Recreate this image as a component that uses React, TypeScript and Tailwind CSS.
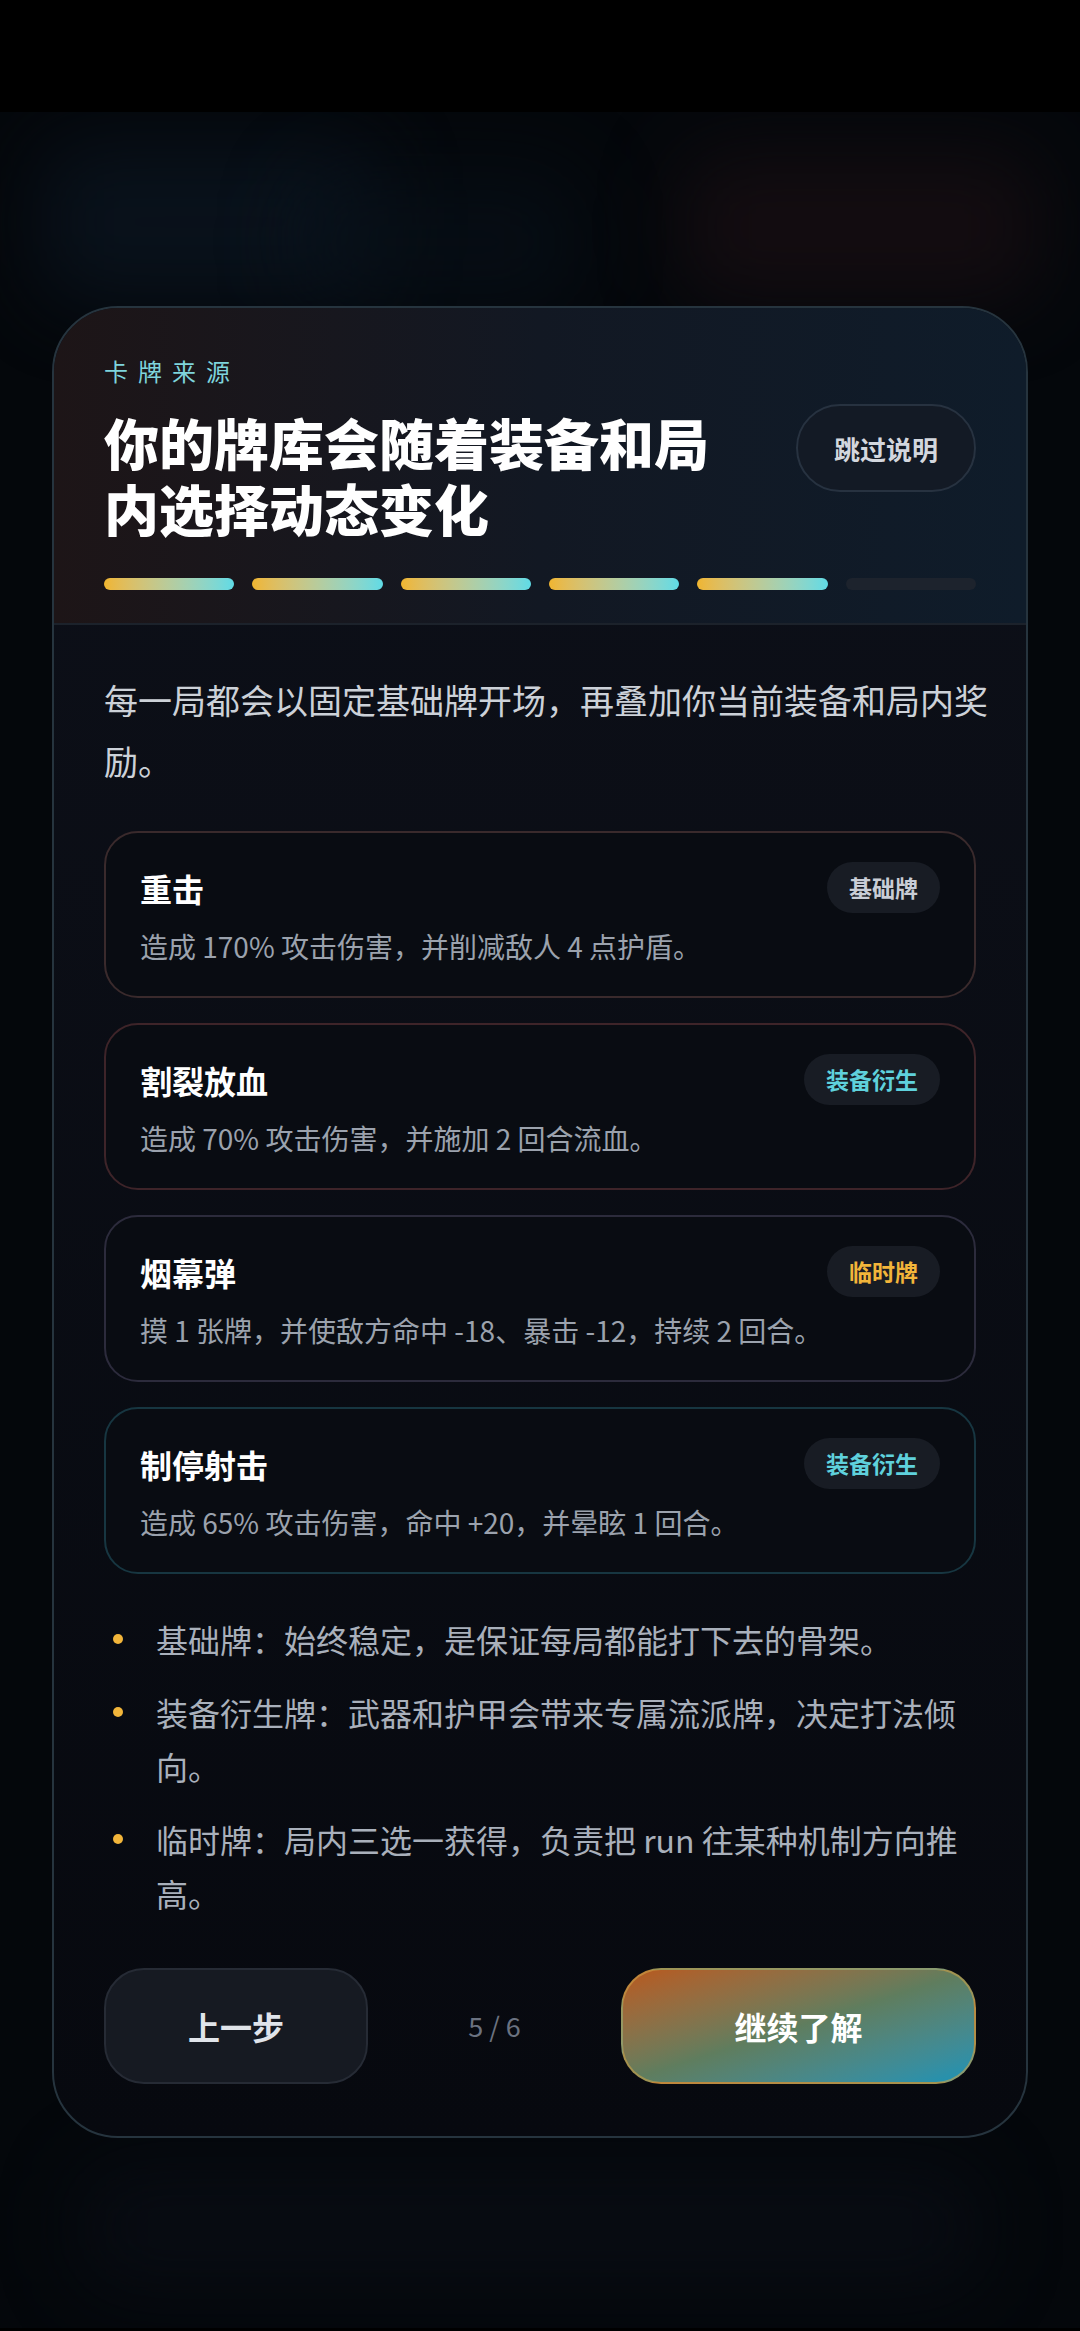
const cards = [
  {
    title: '重击',
    desc: '造成 170% 攻击伤害，并削减敌人 4 点护盾。',
    tag: '基础牌',
    tagColor: 'text-[#c9cdd6]',
    border: 'border-[#3a2a2c]',
  },
  {
    title: '割裂放血',
    desc: '造成 70% 攻击伤害，并施加 2 回合流血。',
    tag: '装备衍生',
    tagColor: 'text-[#5fd1dc]',
    border: 'border-[#3e2429]',
  },
  {
    title: '烟幕弹',
    desc: '摸 1 张牌，并使敌方命中 -18、暴击 -12，持续 2 回合。',
    tag: '临时牌',
    tagColor: 'text-[#f2b53a]',
    border: 'border-[#2c2b3c]',
  },
  {
    title: '制停射击',
    desc: '造成 65% 攻击伤害，命中 +20，并晕眩 1 回合。',
    tag: '装备衍生',
    tagColor: 'text-[#5fd1dc]',
    border: 'border-[#173641]',
  },
];

const notes = [
  '基础牌：始终稳定，是保证每局都能打下去的骨架。',
  '装备衍生牌：武器和护甲会带来专属流派牌，决定打法倾向。',
  '临时牌：局内三选一获得，负责把 run 往某种机制方向推高。',
];

const font = { fontFamily: '"Noto Sans CJK SC", "Noto Sans", sans-serif' };

export default function App() {
  return (
    <div className="min-h-[2331px] w-[1080px] bg-black" style={font}>
      {/* status area */}
      <div className="h-[112px] bg-black" />

      <div className="relative overflow-hidden bg-[#04070b] pb-[190px] pt-[194px]">
        {/* blurred backdrop */}
        <div className="pointer-events-none absolute inset-0">
          <div className="absolute left-[40px] top-[30px] h-[160px] w-[340px] rounded-[40px] bg-[#0b1622] opacity-70 blur-2xl" />
          <div className="absolute left-[300px] top-[60px] h-[140px] w-[280px] rounded-[40px] bg-[#08111a] opacity-60 blur-2xl" />
          <div className="absolute right-[40px] top-[40px] h-[150px] w-[360px] rounded-[40px] bg-[#1a0f13] opacity-70 blur-2xl" />
          <div className="absolute bottom-[40px] left-[80px] h-[120px] w-[900px] rounded-[40px] bg-[#0a0e16] opacity-70 blur-2xl" />
        </div>

        <div className="relative mx-[52px] overflow-hidden rounded-[66px] border-2 border-[#26343e] bg-gradient-to-b from-[#0d1019] to-[#07090f]">
          {/* header */}
          <div className="border-b-2 border-[#1c222b] bg-gradient-to-r from-[#1d1517] via-[#121823] to-[#0f1c2a] px-[50px] pb-[33px] pt-[47px]">
            <div className="text-[24px] leading-[32px] tracking-[10px] text-[#7fd4dc]">卡牌来源</div>
            <div className="mt-[21px] flex items-start gap-[40px]">
              <h1 className="flex-1 text-[55px] font-black leading-[66px] text-white">
                你的牌库会随着装备和局内选择动态变化
              </h1>
              <button className="-mt-[4px] flex h-[88px] w-[180px] shrink-0 items-center justify-center rounded-full border-2 border-[#273240] bg-[#131a25] text-[26px] font-bold text-[#d3d7de]">
                跳过说明
              </button>
            </div>
            <div className="mt-[38px] flex gap-[18px]">
              {[0, 1, 2, 3, 4].map((i) => (
                <div key={i} className="h-[12px] flex-1 rounded-full bg-gradient-to-r from-[#f0b52e] to-[#5fdbe6]" />
              ))}
              <div className="h-[12px] flex-1 rounded-full bg-[#1d232d]" />
            </div>
          </div>

          {/* body */}
          <div className="px-[50px] pb-[52px] pt-[44px]">
            <p className="-mr-[24px] text-[34px] leading-[61px] text-[#ccd1d8]">
              每一局都会以固定基础牌开场，再叠加你当前装备和局内奖励。
            </p>

            <div className="mt-[40px] flex flex-col gap-[25px]">
              {cards.map((c) => (
                <div key={c.title} className={`rounded-[34px] border-2 ${c.border} bg-[#090c12] px-[34px] pb-[30px] pt-[29px]`}>
                  <div className="flex items-center justify-between">
                    <div className="text-[32px] font-bold leading-[40px] text-white">{c.title}</div>
                    <div className={`flex h-[51px] items-center rounded-full bg-[#181c24] px-[22px] text-[23px] font-bold ${c.tagColor}`}>
                      {c.tag}
                    </div>
                  </div>
                  <div className="mt-[13px] text-[28px] leading-[40px] text-[#9ba2ad]">{c.desc}</div>
                </div>
              ))}
            </div>

            <ul className="mt-[38px] flex flex-col gap-[19px]">
              {notes.map((n) => (
                <li key={n} className="flex">
                  <div className="w-[52px] shrink-0 pl-[9px] pt-[22px]">
                    <div className="h-[10px] w-[10px] rounded-full bg-[#f2b53a]" />
                  </div>
                  <span className="text-[32px] leading-[54px] text-[#a9b0bb]">{n}</span>
                </li>
              ))}
            </ul>

            <div className="mt-[48px] flex items-center">
              <button className="flex h-[116px] w-[264px] items-center justify-center rounded-[40px] border-2 border-[#262b35] bg-[#161a22] text-[32px] font-bold text-[#e0e4ea]">
                上一步
              </button>
              <div className="flex-1 text-center text-[27px] text-[#6b7280]">5 / 6</div>
              <button className="flex h-[116px] w-[355px] items-center justify-center rounded-[40px] border-2 border-[#c9a14a]/60 bg-gradient-to-br from-[#b8581a] via-[#5f7d5e] to-[#1593b6] text-[32px] font-bold text-white">
                继续了解
              </button>
            </div>
          </div>
        </div>
      </div>
    </div>
  );
}
